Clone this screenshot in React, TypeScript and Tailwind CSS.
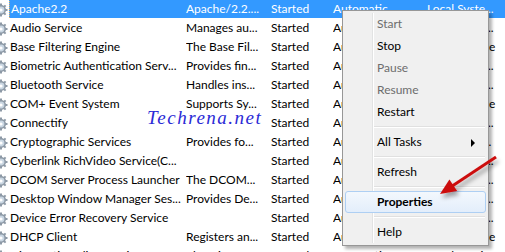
import React from "react";

type Row = { n: string; d: string; s: string; t: string; l: string };

const rows: Row[] = [
  { n: "Apache2.2", d: "Apache/2.2....", s: "Started", t: "Automatic", l: "Local Syste..." },
  { n: "Audio Service", d: "Manages au...", s: "Started", t: "Automatic", l: "Local Syste..." },
  { n: "Base Filtering Engine", d: "The Base Fil...", s: "Started", t: "Automatic", l: "Local Service" },
  { n: "Biometric Authentication Serv...", d: "Provides fin...", s: "Started", t: "Automatic", l: "Local Syste..." },
  { n: "Bluetooth Service", d: "Handles ins...", s: "Started", t: "Automatic", l: "Local Syste..." },
  { n: "COM+ Event System", d: "Supports Sy...", s: "Started", t: "Automatic", l: "Local Service" },
  { n: "Connectify", d: "", s: "Started", t: "Automatic", l: "Local Syste..." },
  { n: "Cryptographic Services", d: "Provides fo...", s: "Started", t: "Automatic", l: "Network S..." },
  { n: "Cyberlink RichVideo Service(C...", d: "", s: "Started", t: "Automatic", l: "Local Syste..." },
  { n: "DCOM Server Process Launcher", d: "The DCOM...", s: "Started", t: "Automatic", l: "Local Syste..." },
  { n: "Desktop Window Manager Ses...", d: "Provides De...", s: "Started", t: "Automatic", l: "Local Syste..." },
  { n: "Device Error Recovery Service", d: "", s: "Started", t: "Automatic", l: "Local Syste..." },
  { n: "DHCP Client", d: "Registers an...", s: "Started", t: "Automatic", l: "Local Service" },
  { n: "Diagnostic Policy Service", d: "The Diagno...", s: "Started", t: "Automatic", l: "Local Service" },
];

function Gear() {
  return (
    <svg width="16" height="16" viewBox="0 0 16 16" className="-ml-[7px] shrink-0">
      <g fill="#8d99a6">
        <circle cx="8" cy="9" r="5" />
        <rect x="7" y="2.5" width="2" height="13" />
        <rect x="1.5" y="8" width="13" height="2" />
        <rect x="7" y="2.5" width="2" height="13" transform="rotate(45 8 9)" />
        <rect x="7" y="2.5" width="2" height="13" transform="rotate(-45 8 9)" />
      </g>
      <circle cx="8" cy="9" r="3.4" fill="#c9d6e2" />
      <circle cx="8" cy="9" r="1.6" fill="#ffffff" />
    </svg>
  );
}

function MenuItem({ label, disabled, bold, hot, arrow }: { label: string; disabled?: boolean; bold?: boolean; hot?: boolean; arrow?: boolean }) {
  return (
    <div
      className={
        "relative h-[22px] flex items-center pl-[31px] rounded-[3px] border " +
        (hot ? "border-[#aecff3] bg-gradient-to-b from-[#f3f8fd] to-[#e3eefb] " : "border-transparent ") +
        (disabled ? "text-[#6d6d6d] " : "text-black ") +
        (bold ? "font-bold" : "")
      }
    >
      {label}
      {arrow && (
        <div className="absolute right-[10px] top-[7px] w-0 h-0 border-y-[4px] border-y-transparent border-l-[4px] border-l-black" />
      )}
    </div>
  );
}

function Sep() {
  return (
    <div className="h-[8px] flex items-center ml-[28px] mr-[1px]">
      <div className="w-full h-[2px] border-t border-t-[#e0e0e0] border-b border-b-white" />
    </div>
  );
}

export default function App() {
  return (
    <div
      className="relative w-[505px] h-[252px] overflow-hidden bg-white text-[12px] text-black"
      style={{ fontFamily: "Lato, sans-serif" }}
    >
      <div className="flex flex-col -mt-[1px]">
        {rows.map((r, i) => {
          const sel = i === 0;
          return (
            <div key={i} className="flex h-[19px] items-center">
              <div className="w-[9px] h-[19px] overflow-hidden flex items-center">
                <Gear />
              </div>
              <div
                className={
                  "flex flex-1 h-[19px] items-center whitespace-nowrap " +
                  (sel ? "bg-[#3399ff] text-white" : "")
                }
              >
                <div className={"w-[177px] h-full flex items-center overflow-hidden pl-[1px] " + (sel ? "border-l border-dotted border-l-[#e8b060]" : "")}>
                  {r.n}
                </div>
                <div className="w-[85px] overflow-hidden">{r.d}</div>
                <div className="w-[62px] overflow-hidden">{r.s}</div>
                <div className="w-[94px] overflow-hidden">{r.t}</div>
                <div className="flex-1 overflow-hidden">{r.l}</div>
              </div>
            </div>
          );
        })}
      </div>

      <div
        className="absolute left-[147px] top-[104px] text-[19px] italic tracking-[1.5px] text-[#2b2bd6]"
        style={{ fontFamily: "'Liberation Serif', serif" }}
      >
        Techrena.net
      </div>

      <div className="absolute left-[342px] top-[10px] w-[147px] border border-[#979797] bg-[#f0f0f0] p-[2px] shadow-[3px_3px_3px_rgba(0,0,0,0.3)]">
        <div className="absolute left-[29px] top-[2px] bottom-[2px] w-[2px] border-l border-l-[#e2e3e3] border-r border-r-white" />
        <MenuItem label="Start" disabled />
        <MenuItem label="Stop" />
        <MenuItem label="Pause" disabled />
        <MenuItem label="Resume" disabled />
        <MenuItem label="Restart" />
        <Sep />
        <MenuItem label="All Tasks" arrow />
        <Sep />
        <MenuItem label="Refresh" />
        <Sep />
        <MenuItem label="Properties" bold hot />
        <Sep />
        <MenuItem label="Help" />
      </div>

      <svg className="absolute left-0 top-0 pointer-events-none" width="505" height="252" viewBox="0 0 505 252">
        <defs>
          <filter id="sh" x="-20%" y="-20%" width="140%" height="160%">
            <feDropShadow dx="2" dy="4" stdDeviation="2" floodColor="#000" floodOpacity="0.35" />
          </filter>
        </defs>
        <g filter="url(#sh)">
          <line x1="496" y1="157" x2="450" y2="187.5" stroke="#cc1111" strokeWidth="3" />
          <polygon points="440,194 449.4,179.4 457.2,191" fill="#cc1111" />
        </g>
      </svg>
    </div>
  );
}
